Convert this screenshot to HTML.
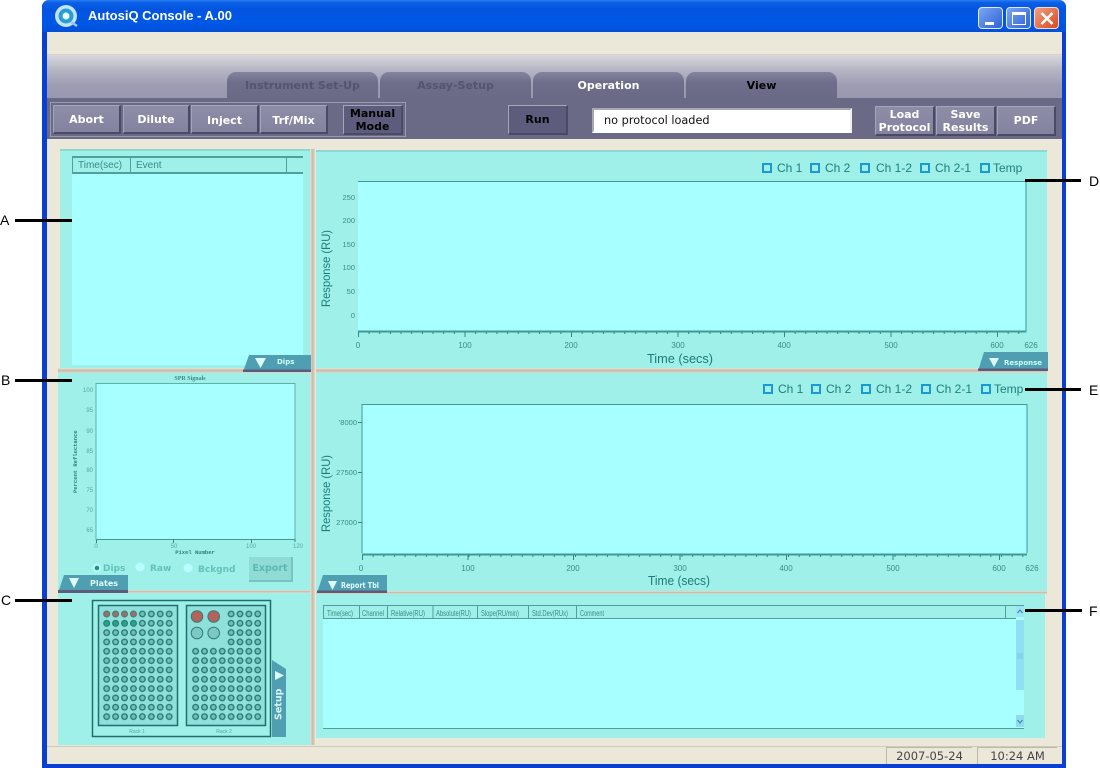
<!DOCTYPE html>
<html><head><meta charset="utf-8"><title>AutosiQ Console</title>
<style>
html,body{margin:0;padding:0;background:#fff;width:1100px;height:768px;overflow:hidden}
#r{position:relative;width:1100px;height:768px;overflow:hidden;font-family:"Liberation Sans",sans-serif}
#r div{position:absolute;box-sizing:border-box}
.tab{top:72px;height:27px;width:151px;border-radius:9px 9px 0 0;background:linear-gradient(#85849f,#6e6d8a 40%,#6a6986);font:bold 11px "DejaVu Sans",sans-serif;text-align:center;line-height:28px}
.btn{background:linear-gradient(#8e8da8,#84839f);border-top:1px solid #a5a4bb;border-left:1px solid #a5a4bb;border-right:2px solid #4b4a66;border-bottom:2px solid #4b4a66;color:#fff;font:bold 11px/13px "DejaVu Sans",sans-serif;text-align:center;display:flex;align-items:center;justify-content:center}
.dk{background:#5d5c7c;color:#000}
.h{background:linear-gradient(#e8e4d8,#c4baa8 50%,#e0dbcd)}
.v{background:linear-gradient(90deg,#e8e4d8,#c4baa8 50%,#e0dbcd)}
</style></head><body><div id="r">
<!-- window frame -->
<div style="left:42px;top:0;width:1024px;height:768px;background:#0a3fd0;border-radius:7px 7px 0 0"></div>
<div style="left:42px;top:0;width:1024px;height:32px;border-radius:7px 7px 0 0;background:linear-gradient(#2a7df0 0,#0a5fe6 8%,#0355e0 30%,#0058e6 70%,#0250d8 100%)"></div>
<div style="left:47px;top:32px;width:1015px;height:732px;background:#ece8d9"></div>
<div style="left:47px;top:54px;width:1015px;height:1px;background:#d8d4c4"></div>
<div style="left:47px;top:55px;width:1015px;height:44px;background:linear-gradient(#d8d8de 0,#b9b8c6 30%,#9d9cb2 70%,#9897ae 100%)"></div>
<div style="left:47px;top:98px;width:1015px;height:41px;background:#6a6986"></div>
<!-- title -->
<svg style="position:absolute;left:52px;top:4px" width="28" height="26" viewBox="0 0 28 26"><circle cx="14" cy="12" r="11" fill="#bfe6ff"/><circle cx="14" cy="12" r="7.5" fill="#2b9bd8"/><circle cx="14" cy="12" r="3.5" fill="#e8fbff"/><path d="M19 18l6 4" stroke="#9fc8f0" stroke-width="2.5"/></svg>
<div style="left:88px;top:8px;color:#fff;font:bold 13px/16px 'Liberation Sans',sans-serif;white-space:nowrap">AutosiQ Console - A.00</div>
<div style="left:978px;top:7px;width:25px;height:22px;border:1px solid #dfe9ff;border-radius:4px;background:linear-gradient(135deg,#7ba6f0,#2e62d8)"><div style="left:6px;top:14px;width:9px;height:3px;background:#fff"></div></div>
<div style="left:1006px;top:7px;width:25px;height:22px;border:1px solid #dfe9ff;border-radius:4px;background:linear-gradient(135deg,#7ba6f0,#2e62d8)"><div style="left:5px;top:4px;width:14px;height:13px;border:1px solid #fff;border-top:3px solid #fff"></div></div>
<div style="left:1034px;top:7px;width:25px;height:22px;border:1px solid #f0dcd0;border-radius:4px;background:linear-gradient(135deg,#f0a080,#d84a20)"><svg style="position:absolute;left:4px;top:3px" width="16" height="15"><path d="M2.500 2l11 11M13.500 2l-11 11" stroke="#fff" stroke-width="2.600"/></svg></div>
<!-- tabs -->
<div class="tab" style="left:227px;color:#55546f">Instrument Set-Up</div>
<div class="tab" style="left:380px;color:#55546f">Assay-Setup</div>
<div class="tab" style="left:533px;color:#fff;line-height:27px">Operation</div>
<div class="tab" style="left:686px;color:#000;line-height:27px">View</div>
<!-- toolbar -->
<div style="left:50px;top:102px;width:356px;height:35px;border:1px solid #9a99b2"></div>
<div class="btn" style="left:53px;top:105px;width:68px;height:29px">Abort</div>
<div class="btn" style="left:123px;top:105px;width:67px;height:29px">Dilute</div>
<div class="btn" style="left:191px;top:105px;width:68px;height:29px;padding-top:2px">Inject</div>
<div class="btn" style="left:260px;top:105px;width:68px;height:29px;padding-top:2px">Trf/Mix</div>
<div class="btn dk" style="left:343px;top:105px;width:60px;height:30px">Manual<br>Mode</div>
<div class="btn dk" style="left:508px;top:105px;width:60px;height:30px">Run</div>
<div style="left:592px;top:108px;width:260px;height:25px;background:#fff;border:2px solid #a8a8b0;border-bottom-color:#fff;border-right-color:#eee;font:11.300px/21px 'DejaVu Sans',sans-serif;padding-left:10px;color:#111">no protocol loaded</div>
<div class="btn" style="left:875px;top:106px;width:60px;height:30px">Load<br>Protocol</div>
<div class="btn" style="left:936px;top:106px;width:60px;height:30px">Save<br>Results</div>
<div class="btn" style="left:997px;top:106px;width:59px;height:30px">PDF</div>
<!-- panels -->
<div style="left:60px;top:149px;width:251px;height:220px;background:#9ef0e8;border-top:2px solid #8fd8d0"></div>
<div style="left:72px;top:156px;width:231px;height:18px;background:#9ef0e8;border:1px solid #4f9f9b;border-width:2px 0 2px 1px"></div>
<div style="left:72px;top:174px;width:231px;height:191px;background:#a8ffff"></div>
<div style="left:130px;top:157px;width:1px;height:17px;background:#4f9f9b"></div>
<div style="left:286px;top:157px;width:1px;height:17px;background:#4f9f9b"></div>
<div style="left:78px;top:159px;font-size:10px;color:#3c8a88;line-height:14px">Time(sec)</div>
<div style="left:136px;top:159px;font-size:10px;color:#3c8a88;line-height:14px">Event</div>
<div class="h" style="left:58px;top:368px;width:252px;height:5px"></div>
<div style="left:58px;top:373px;width:252px;height:217px;background:#9ef0e8"></div>
<div class="h" style="left:58px;top:590px;width:252px;height:3px"></div>
<div style="left:58px;top:593px;width:252px;height:152px;background:#9ef0e8"></div>
<div class="v" style="left:310px;top:149px;width:5px;height:596px"></div>
<div style="left:316px;top:150px;width:731px;height:219px;background:#9ef0e8;border-top:2px solid #8fd8d0"></div>
<div class="h" style="left:316px;top:368px;width:731px;height:5px"></div>
<div style="left:316px;top:373px;width:731px;height:218px;background:#9ef0e8"></div>
<div class="h" style="left:316px;top:591px;width:731px;height:3px"></div>
<div style="left:316px;top:594px;width:729px;height:144px;background:#9ef0e8"></div>
<!-- main svg -->
<svg style="position:absolute;left:0;top:0" width="1100" height="768" font-family="'Liberation Sans',sans-serif">
<defs>
<pattern id="t1" patternUnits="userSpaceOnUse" x="358" y="0" width="10.650" height="768"><path d="M.5 0V768" stroke="#2f8a86"/></pattern>
<pattern id="t2" patternUnits="userSpaceOnUse" x="362" y="0" width="10.650" height="768"><path d="M.5 0V768" stroke="#2f8a86"/></pattern>
<pattern id="w" patternUnits="userSpaceOnUse" x="102.200" y="609.300" width="8.930" height="9.330"><circle cx="4.465" cy="4.665" r="2.800" fill="#68c2b8" stroke="#2a7672" stroke-width="1.300"/></pattern>
<pattern id="w2" patternUnits="userSpaceOnUse" x="191.200" y="609.300" width="8.870" height="9.330"><circle cx="4.435" cy="4.665" r="2.800" fill="#68c2b8" stroke="#2a7672" stroke-width="1.300"/></pattern>
</defs>
<!-- plot D -->
<rect x="358" y="181.500" width="668" height="150" fill="#a8ffff"/>
<path d="M358 181.500H1026V332" fill="none" stroke="#3f9a96"/>
<path d="M358 331.500H1026" stroke="#3f9a96" stroke-width="2"/>
<rect x="358" y="332" width="668" height="2" fill="url(#t1)"/>
<path d="M358.500 332v5M465 332v5M571.500 332v5M678 332v5M784.500 332v5M891 332v5M997.500 332v5" stroke="#2f8a86"/>
<g font-size="7.500" fill="#3c8a88" text-anchor="end">
<text x="355" y="200">250</text><text x="355" y="223">200</text><text x="355" y="247">150</text><text x="355" y="270">100</text><text x="355" y="294">50</text><text x="355" y="318">0</text>
</g>
<g font-size="8" fill="#3c8a88" text-anchor="middle">
<text x="358" y="348">0</text><text x="465" y="348">100</text><text x="571" y="348">200</text><text x="678" y="348">300</text><text x="784" y="348">400</text><text x="891" y="348">500</text><text x="997" y="348">600</text><text x="1031" y="348">626</text>
</g>
<text x="330" y="307" transform="rotate(-90 330 307)" font-size="12" fill="#1f7a78" textLength="77" lengthAdjust="spacingAndGlyphs">Response (RU)</text>
<text x="647" y="363" font-size="12.500" fill="#1f7a78" textLength="66" lengthAdjust="spacingAndGlyphs">Time (secs)</text>
<!-- plot E -->
<rect x="362" y="404.500" width="665" height="149" fill="#a8ffff"/>
<path d="M362 553V404.500H1027V553" fill="none" stroke="#3f9a96"/>
<path d="M362 554.500H1027" stroke="#3f9a96" stroke-width="2"/>
<rect x="362" y="555" width="665" height="2" fill="url(#t2)"/>
<path d="M362.500 555v5M468 555v5M573.500 555v5M680 555v5M786.500 555v5M893 555v5M999.500 555v5" stroke="#2f8a86"/>
<path d="M358 422.500h4M358 472.500h4M358 522.500h4" stroke="#2f8a86"/>
<g font-size="7.500" fill="#3c8a88" text-anchor="end">
<text x="357" y="425">'8000</text><text x="357" y="475">27500</text><text x="357" y="525">27000</text>
</g>
<g font-size="8" fill="#3c8a88" text-anchor="middle">
<text x="361" y="571">0</text><text x="468" y="571">100</text><text x="573" y="571">200</text><text x="680" y="571">300</text><text x="786" y="571">400</text><text x="893" y="571">500</text><text x="999" y="571">600</text><text x="1032" y="571">626</text>
</g>
<text x="330" y="532" transform="rotate(-90 330 532)" font-size="12" fill="#1f7a78" textLength="77" lengthAdjust="spacingAndGlyphs">Response (RU)</text>
<text x="648" y="585" font-size="12.500" fill="#1f7a78" textLength="62" lengthAdjust="spacingAndGlyphs">Time (secs)</text>
<!-- checkboxes -->
<g fill="none" stroke="#1c9ad0" stroke-width="2">
<rect x="763" y="164" width="8" height="8"/><rect x="811" y="164" width="8" height="8"/><rect x="861" y="164" width="8" height="8"/><rect x="921" y="164" width="8" height="8"/><rect x="981" y="164" width="8" height="8"/>
<rect x="764" y="385" width="8" height="8"/><rect x="812" y="385" width="8" height="8"/><rect x="862" y="385" width="8" height="8"/><rect x="922" y="385" width="8" height="8"/><rect x="982" y="385" width="8" height="8"/>
</g>
<g font-size="12" fill="#1f7f7c">
<text x="777" y="172">Ch 1</text><text x="825" y="172">Ch 2</text><text x="876" y="172">Ch 1-2</text><text x="935" y="172">Ch 2-1</text><text x="993" y="172">Temp</text>
<text x="778" y="393">Ch 1</text><text x="826" y="393">Ch 2</text><text x="876" y="393">Ch 1-2</text><text x="936" y="393">Ch 2-1</text><text x="994" y="393">Temp</text>
</g>
<!-- plot B -->
<rect x="96" y="383.500" width="199" height="156" fill="#a8ffff" stroke="#5fb0ac"/>
<path d="M96 539.500H295" stroke="#3f9a96"/>
<path d="M96.500 540v3M173.500 539v4M251.500 539v4M295 539v3" stroke="#2f8a86"/>
<text x="190" y="380" font-size="6" font-family="'Liberation Serif',serif" font-weight="bold" fill="#3c8a88" text-anchor="middle">SPR Signals</text>
<g font-size="6" fill="#5aa5a2" text-anchor="end">
<text x="93" y="392">100</text><text x="93" y="412">95</text><text x="93" y="433">90</text><text x="93" y="453">85</text><text x="93" y="472">80</text><text x="93" y="492">75</text><text x="93" y="512">70</text><text x="93" y="532">65</text>
</g>
<g font-size="6" fill="#5aa5a2" text-anchor="middle">
<text x="96" y="548">0</text><text x="174" y="548">50</text><text x="251" y="548">100</text><text x="298" y="548">120</text>
</g>
<text x="195" y="554" font-size="5.500" font-family="'Liberation Mono',monospace" font-weight="bold" fill="#2f7d7a" text-anchor="middle">Pixel Number</text>
<text x="77" y="493" transform="rotate(-90 77 493)" font-size="5.500" font-family="'Liberation Mono',monospace" font-weight="bold" fill="#2f7d7a">Percent Reflectance</text>
<!-- radios -->
<circle cx="97" cy="568" r="4.500" fill="#b5ffff"/><circle cx="97" cy="568" r="2.300" fill="#2f8a86"/>
<circle cx="140" cy="567" r="4.500" fill="#b5ffff"/><circle cx="188" cy="568" r="4.500" fill="#b5ffff"/>
<g font-size="9" font-weight="bold" font-family="'DejaVu Sans',sans-serif" fill="#66c0bc">
<text x="103" y="571">Dips</text><text x="150" y="571">Raw</text><text x="198" y="572">Bckgnd</text>
</g>
<!-- racks -->
<rect x="92.500" y="600.500" width="178" height="136" fill="#9ef0e8" stroke="#1f6f6c" stroke-width="1.500"/>
<rect x="98.500" y="605.500" width="79" height="120" fill="#8fe0da" stroke="#1f6f6c" stroke-width="1.500"/>
<rect x="186.500" y="605.500" width="79" height="120" fill="#8fe0da" stroke="#1f6f6c" stroke-width="1.500"/>
<rect x="102.200" y="609.300" width="71.440" height="112" fill="url(#w)"/>
<rect x="191.200" y="646.620" width="70.960" height="74.680" fill="url(#w2)"/>
<rect x="226.680" y="609.300" width="35.480" height="37.320" fill="url(#w2)"/>
<g fill="#a56c62" stroke="#4f7d7a" stroke-width="1"><circle cx="106.700" cy="614" r="2.800"/><circle cx="115.600" cy="614" r="2.800"/><circle cx="124.600" cy="614" r="2.800"/><circle cx="133.500" cy="614" r="2.800"/></g>
<g fill="#1fa888" stroke="#2f7d7a" stroke-width="1"><circle cx="106.700" cy="623.500" r="2.800"/><circle cx="115.600" cy="623.500" r="2.800"/><circle cx="124.600" cy="623.500" r="2.800"/><circle cx="133.500" cy="623.500" r="2.800"/></g>
<g stroke="#2f7d7a" stroke-width="1"><circle cx="197" cy="616.500" r="5.800" fill="#b5625a"/><circle cx="213.700" cy="616.500" r="5.800" fill="#b5625a"/><circle cx="197" cy="633" r="5.800" fill="#7cc8c6"/><circle cx="213.700" cy="633" r="5.800" fill="#7cc8c6"/></g>
<text x="137" y="733" font-size="5" fill="#5aa5a2" text-anchor="middle">Rack 1</text>
<text x="224" y="733" font-size="5" fill="#5aa5a2" text-anchor="middle">Rack 2</text>
<!-- setup tab -->
<path d="M272 660L286 669V737H272Z" fill="#509eb1"/>
<path d="M275 671h9l-4.500 9z" fill="#dff" transform="rotate(-90 279.500 675.500)"/>
<text x="281.500" y="720" transform="rotate(-90 281.500 720)" font-size="9.500" font-weight="bold" font-family="'DejaVu Sans',sans-serif" fill="#d5f5f5">Setup</text>
<!-- small tabs -->
<path d="M249 355H311V372H243Z" fill="#509eb1"/><path d="M243 369.500H311V372H243Z" fill="#5c5b7c"/>
<path d="M255 358h11l-5.500 10z" fill="#dff"/>
<text x="277" y="364" font-size="7" font-family="'DejaVu Sans',sans-serif" fill="#cff" font-weight="bold">Dips</text>
<path d="M64 575H128V593H58Z" fill="#509eb1"/><path d="M58 590H128V593H58Z" fill="#5c5b7c"/>
<path d="M69 578h10l-5 10z" fill="#dff"/>
<text x="90" y="586" font-size="8" font-weight="bold" font-family="'DejaVu Sans',sans-serif" fill="#dff">Plates</text>
<path d="M984 352H1048V371H978Z" fill="#509eb1"/><path d="M978 368.500H1048V371H978Z" fill="#5c5b7c"/>
<path d="M989 358h10l-5 9z" fill="#dff"/>
<text x="1004" y="365" font-size="7" font-weight="bold" font-family="'DejaVu Sans',sans-serif" fill="#cff">Response</text>
<path d="M323 575H387V593H317Z" fill="#509eb1"/><path d="M317 590.500H387V593H317Z" fill="#5c5b7c"/>
<path d="M328 581h9l-4.500 9z" fill="#dff"/>
<text x="341" y="588" font-size="7.500" font-weight="bold" font-family="'DejaVu Sans',sans-serif" fill="#dff" textLength="38" lengthAdjust="spacingAndGlyphs">Report Tbl</text>
<!-- table F -->
<rect x="323" y="618" width="693" height="110" fill="#a8ffff"/>
<path d="M323 605.500H1024M323 618.500H1016M323 728.500H1024M323.500 605V618" stroke="#4f9f9b"/>
<path d="M359.500 606v12M387.500 606v12M433 606v12M477.500 606v12M528.500 606v12M576.500 606v12M1005.500 606v12" stroke="#4f9f9b"/>
<g font-size="8" fill="#3c8a88">
<text x="327" y="616" textLength="26" lengthAdjust="spacingAndGlyphs">Time(sec)</text><text x="362" y="616" textLength="22" lengthAdjust="spacingAndGlyphs">Channel</text><text x="391" y="616" textLength="34" lengthAdjust="spacingAndGlyphs">Relative(RU)</text><text x="436" y="616" textLength="35" lengthAdjust="spacingAndGlyphs">Absolute(RU)</text><text x="481" y="616" textLength="38" lengthAdjust="spacingAndGlyphs">Slope(RU/min)</text><text x="532" y="616" textLength="36" lengthAdjust="spacingAndGlyphs">Std.Dev(RUx)</text><text x="580" y="616" textLength="24" lengthAdjust="spacingAndGlyphs">Comment</text>
</g>
<rect x="1016" y="606" width="8" height="122" fill="#a8ffff"/>
<rect x="1016" y="620" width="8" height="70" fill="#8fe0f5"/>
<rect x="1016" y="606" width="8" height="11" fill="#9de5f5"/>
<rect x="1016" y="715" width="8" height="12" fill="#8fdcef"/>
<path d="M1017.500 613l2.500-3 2.500 3M1017.500 720l2.500 3 2.500-3" fill="none" stroke="#3f8aa8" stroke-width="1.200"/>
<path d="M1017 654h6M1017 656h6M1017 658h6" stroke="#7cc8e0"/>
<!-- annotation lines -->
<g stroke="#000" stroke-width="3">
<path d="M15 220.500H72M15 380.500H72M15 600.500H72M1025 180.500H1081M1025 389.500H1081M1025 610.500H1082"/>
</g>
<g font-size="14" fill="#000">
<text x="0" y="225">A</text><text x="1" y="385">B</text><text x="1" y="605">C</text><text x="1089" y="186">D</text><text x="1089" y="395">E</text><text x="1089" y="616">F</text>
</g>
</svg>
<div style="left:249px;top:557px;width:44px;height:25px;background:#8fdcd6;border-right:2px solid #78c4be;border-bottom:2px solid #78c4be;color:#5cb8b3;font:bold 9.500px/23px 'DejaVu Sans',sans-serif;text-align:center">Export</div>
<!-- status bar -->
<div style="left:47px;top:746px;width:1015px;height:1px;background:#cfcbbc"></div>
<div style="left:886px;top:747px;width:86px;height:18px;border-left:1px solid #bdb9a8;border-top:1px solid #bdb9a8;font:11.500px/17px 'DejaVu Sans',sans-serif;color:#444;text-align:center">2007-05-24</div>
<div style="left:977px;top:747px;width:80px;height:18px;border-left:1px solid #bdb9a8;border-top:1px solid #bdb9a8;font:11.500px/17px 'DejaVu Sans',sans-serif;color:#444;text-align:center">10:24 AM</div>
<div style="left:42px;top:764px;width:1024px;height:4px;background:#0a3fd0"></div>
</div></body></html>
